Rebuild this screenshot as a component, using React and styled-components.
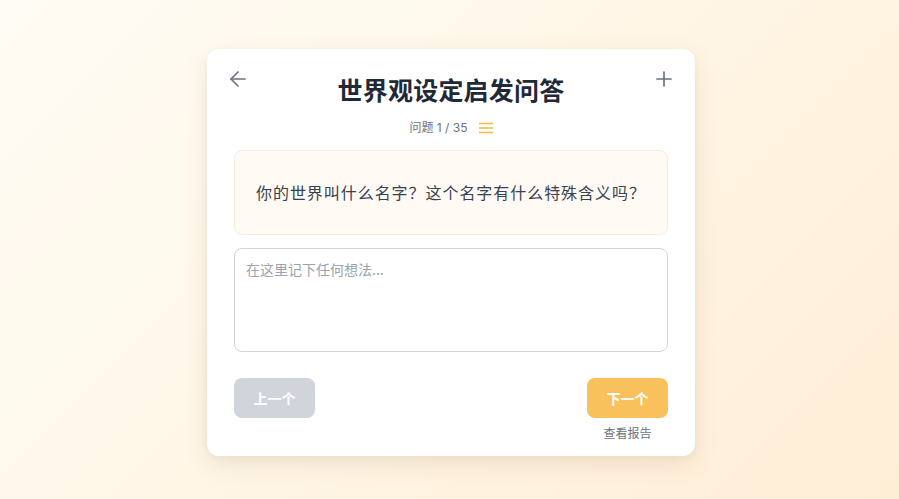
import React, { useState } from 'react';
import styled, { createGlobalStyle } from 'styled-components';

const GlobalStyle = createGlobalStyle`
  html, body {
    margin: 0;
    padding: 0;
  }
  body {
    font-family: Inter, "Noto Sans CJK SC", sans-serif;
    background: linear-gradient(135deg, #fffcf5 0%, #fff5e4 55%, #ffedd6 100%);
    min-height: 100vh;
  }
  * { box-sizing: border-box; }
`;

const Page = styled.div`
  width: 899px;
  height: 499px;
  display: flex;
  align-items: center;
  justify-content: center;
  padding: 5px 0 0 3px;
`;

const Card = styled.div`
  width: 488px;
  background: #ffffff;
  border-radius: 12px;
  box-shadow: 0 8px 24px rgba(120, 90, 40, 0.12), 0 2px 6px rgba(0, 0, 0, 0.04);
  padding: 24px 27px 15px;
  display: flex;
  flex-direction: column;
`;

const Header = styled.div`
  display: flex;
  justify-content: space-between;
  align-items: flex-start;
`;

const IconButton = styled.button`
  border: none;
  background: none;
  padding: 0;
  margin: -6px -8px 0;
  width: 24px;
  height: 24px;
  display: flex;
  align-items: center;
  justify-content: center;
  color: #6b7280;
  cursor: pointer;
`;

const Title = styled.h1`
  margin: 0;
  font-family: "Noto Sans CJK SC", sans-serif;
  font-size: 25px;
  line-height: 32px;
  font-weight: 700;
  color: #1f2937;
  letter-spacing: 0.2px;
`;

const Progress = styled.div`
  margin-top: 15px;
  display: flex;
  justify-content: center;
  align-items: center;
  gap: 11px;
  font-size: 12px;
  line-height: 16px;
  color: #6b7280;
`;

const QuestionBox = styled.div`
  margin-top: 14px;
  background: #fffaf4;
  border: 1px solid #f4ede3;
  border-radius: 8px;
  padding: 29px 16px 30px 21px;
  font-family: "Noto Sans CJK SC", sans-serif;
  font-size: 16px;
  line-height: 24px;
  letter-spacing: 0.95px;
  white-space: nowrap;
  color: #374151;
`;

const Notes = styled.textarea`
  margin-top: 13px;
  height: 104px;
  width: 100%;
  resize: none;
  border: 1px solid #d1d5db;
  border-radius: 8px;
  padding: 10px 11px;
  font-family: "Noto Sans CJK SC", sans-serif;
  font-size: 14px;
  line-height: 20px;
  color: #374151;
  outline: none;
  &::placeholder {
    color: #9ca3af;
  }
`;

const Footer = styled.div`
  margin-top: 26px;
  display: flex;
  justify-content: space-between;
  align-items: flex-start;
`;

const NavButton = styled.button`
  width: 81px;
  height: 40px;
  border: none;
  border-radius: 8px;
  background: ${p => (p.$primary ? '#f8c15b' : '#d1d5db')};
  color: #ffffff;
  font-family: "Noto Sans CJK SC", sans-serif;
  font-size: 14px;
  font-weight: 700;
  cursor: ${p => (p.disabled ? 'default' : 'pointer')};
`;

const RightCol = styled.div`
  display: flex;
  flex-direction: column;
  align-items: center;
  gap: 7px;
`;

const ReportLink = styled.span`
  font-family: "Noto Sans CJK SC", sans-serif;
  font-size: 12px;
  line-height: 16px;
  color: #6b7280;
  cursor: pointer;
`;

const ArrowLeft = () => (
  <svg width="24" height="24" viewBox="0 0 24 24" fill="none" stroke="currentColor" strokeWidth="1.7" strokeLinecap="round" strokeLinejoin="round">
    <path d="M19 12H5" />
    <path d="M12 19l-7-7 7-7" />
  </svg>
);

const Plus = () => (
  <svg width="24" height="24" viewBox="0 0 24 24" fill="none" stroke="currentColor" strokeWidth="1.7" strokeLinecap="round">
    <path d="M12 5v14" />
    <path d="M5 12h14" />
  </svg>
);

const MenuLines = () => (
  <svg width="14" height="12" viewBox="0 0 14 12" fill="none" stroke="#f2bd4b" strokeWidth="1.6">
    <path d="M0 1.5h14" />
    <path d="M0 6h14" />
    <path d="M0 10.5h14" />
  </svg>
);

export default function App() {
  const [index] = useState(1);
  const total = 35;

  return (
    <>
      <GlobalStyle />
      <Page>
        <Card>
          <Header>
            <IconButton aria-label="返回"><ArrowLeft /></IconButton>
            <Title>世界观设定启发问答</Title>
            <IconButton aria-label="添加"><Plus /></IconButton>
          </Header>

          <Progress>
            <span>问题 {index} / {total}</span>
            <MenuLines />
          </Progress>

          <QuestionBox>你的世界叫什么名字？这个名字有什么特殊含义吗？</QuestionBox>

          <Notes placeholder="在这里记下任何想法..." />

          <Footer>
            <NavButton disabled>上一个</NavButton>
            <RightCol>
              <NavButton $primary>下一个</NavButton>
              <ReportLink>查看报告</ReportLink>
            </RightCol>
          </Footer>
        </Card>
      </Page>
    </>
  );
}
